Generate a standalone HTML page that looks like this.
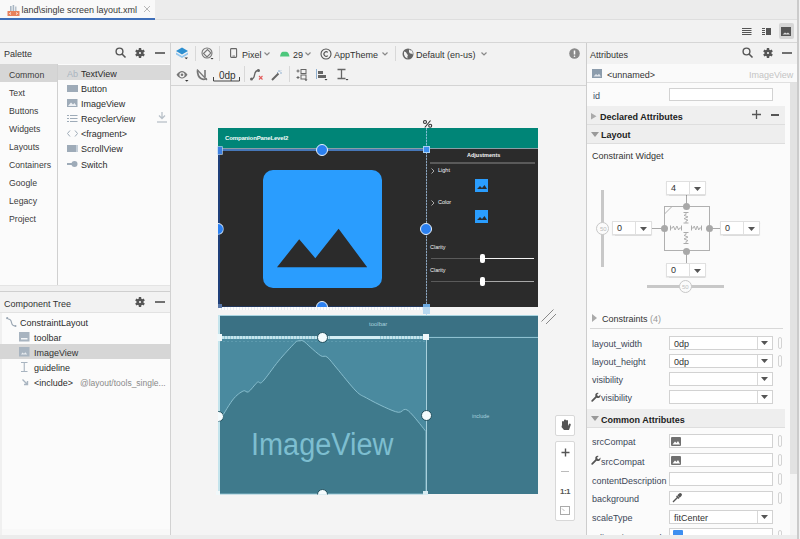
<!DOCTYPE html>
<html><head><meta charset="utf-8">
<style>
*{box-sizing:border-box;margin:0;padding:0}
html,body{width:800px;height:539px;overflow:hidden;background:#f2f2f2;font-family:"Liberation Sans",sans-serif;color:#2b2b2b;font-size:9px}
.a{position:absolute}
.t{position:absolute;white-space:nowrap;line-height:10px;height:10px}
svg{position:absolute;overflow:visible}
.ic{fill:#6e6e6e}
.bx{position:absolute;background:#fff;border:1px solid #d2d2d2}
</style></head><body>
<!-- top tab bar -->
<div class="a" style="left:0;top:0;width:800px;height:20px;background:#ececec;border-bottom:1px solid #dedede"></div>
<div class="a" style="left:0;top:0;width:155px;height:20px;background:#f9f9f9"></div>
<div class="a" style="left:0;top:17.5px;width:155px;height:3px;background:#3f6fb9"></div>
<svg style="left:7px;top:4px" width="13" height="12"><rect x="0.5" y="7" width="12" height="5" fill="#e9825c"/><rect x="3" y="2" width="1.6" height="5" fill="#a8b6c4"/><rect x="5.6" y="1" width="1.6" height="6" fill="#a8b6c4"/><rect x="8.2" y="2.5" width="1.2" height="4.5" fill="#a8b6c4"/><path d="M4 8.5l-1.5 1 1.5 1M9 8.5l1.5 1-1.5 1" stroke="#fff" stroke-width="0.8" fill="none"/></svg>
<div class="t" style="left:21.5px;top:5px;font-size:9px;color:#3a3a3a">land\single screen layout.xml</div>
<svg style="left:143px;top:5px" width="8" height="8"><path d="M1 1l6 6M7 1l-6 6" stroke="#b8b8b8" stroke-width="1"/></svg>
<!-- toolbar row -->
<div class="a" style="left:0;top:20px;width:800px;height:23px;background:#f2f2f2;border-bottom:1px solid #d6d6d6"></div>
<svg style="left:742px;top:27px" width="10" height="9"><path d="M0 1.5h9.5M0 3.5h9.5M0 5.5h9.5M0 7.5h9.5" stroke="#555" stroke-width="1"/></svg>
<svg style="left:762px;top:27px" width="10" height="9"><path d="M0 1.5h3M0 3.5h3M0 5.5h3M0 7.5h3" stroke="#555" stroke-width="1"/><rect x="4" y="1" width="5" height="7" fill="#555"/></svg>
<div class="a" style="left:779px;top:23px;width:15px;height:16px;background:#d6d6d6;border-radius:2px"></div>
<svg style="left:781px;top:27px" width="10" height="9"><rect x="0" y="0" width="10" height="9" fill="#555"/><path d="M1.5 7.5l2.5-2 1.5 1 1.5-1 2 2z" fill="#ddd"/></svg>

<!-- LEFT PANEL -->
<div class="a" style="left:0;top:43px;width:170px;height:21px;background:#f2f2f2"></div>
<div class="t" style="left:4px;top:49px;color:#333">Palette</div>
<svg style="left:115px;top:47px" width="12" height="12"><circle cx="4.5" cy="4.5" r="3.4" stroke="#555" stroke-width="1.4" fill="none"/><path d="M7 7l3.5 3.5" stroke="#555" stroke-width="1.6"/></svg>
<svg style="left:135px;top:48px" width="10" height="10"><circle cx="5" cy="5" r="3.5" fill="#555"/><path d="M6.13 7.04L8.64 8.49L9.84 6.41L7.33 4.96zM3.80 7.00L3.80 9.90L6.20 9.90L6.20 7.00zM2.67 4.96L0.16 6.41L1.36 8.49L3.87 7.04zM3.87 2.96L1.36 1.51L0.16 3.59L2.67 5.04zM6.20 3.00L6.20 0.10L3.80 0.10L3.80 3.00zM7.33 5.04L9.84 3.59L8.64 1.51L6.13 2.96z" fill="#555"/><circle cx="5" cy="5" r="1.1" fill="#f2f2f2"/></svg>
<div class="a" style="left:155px;top:52px;width:9.5px;height:2px;background:#707070"></div>

<div class="a" style="left:0;top:64px;width:170px;height:221px;background:#fbfbfb"></div>

<div class="a" style="left:0;top:64px;width:57px;height:18px;background:#d6d6d6"></div>
<div class="a" style="left:58px;top:65px;width:112px;height:15px;background:#d9d9d9"></div>
<div class="a" style="left:57px;top:64px;width:1px;height:221px;background:#d0d0d0"></div>
<div class="t" style="left:9px;top:70px;font-size:8.7px;color:#3c3c3c">Common</div>
<div class="t" style="left:9px;top:88px;font-size:8.7px;color:#3c3c3c">Text</div>
<div class="t" style="left:9px;top:106px;font-size:8.7px;color:#3c3c3c">Buttons</div>
<div class="t" style="left:9px;top:124px;font-size:8.7px;color:#3c3c3c">Widgets</div>
<div class="t" style="left:9px;top:142px;font-size:8.7px;color:#3c3c3c">Layouts</div>
<div class="t" style="left:9px;top:160px;font-size:8.7px;color:#3c3c3c">Containers</div>
<div class="t" style="left:9px;top:178px;font-size:8.7px;color:#3c3c3c">Google</div>
<div class="t" style="left:9px;top:196px;font-size:8.7px;color:#3c3c3c">Legacy</div>
<div class="t" style="left:9px;top:214px;font-size:8.7px;color:#3c3c3c">Project</div>

<div class="t" style="left:67px;top:69px;color:#aab4c0;font-size:9px">Ab</div>
<div class="t" style="left:81px;top:69px">TextView</div>
<div class="a" style="left:67px;top:85px;width:10.5px;height:7px;background:#9eabb8"></div>
<div class="t" style="left:81px;top:84px">Button</div>
<svg style="left:67px;top:99px" width="11" height="9"><rect x="0" y="0" width="10.5" height="8" fill="#9eabb8"/><path d="M1 7l3-3.5 2 2 1.5-1.5 2 3z" fill="#eef1f4"/></svg>
<div class="t" style="left:81px;top:99px">ImageView</div>
<svg style="left:67px;top:114px" width="11" height="9"><path d="M0 1.5h2M3 1.5h7.5M0 4.5h2M3 4.5h7.5M0 7.5h2M3 7.5h7.5" stroke="#9eabb8" stroke-width="1.2"/></svg>
<div class="t" style="left:81px;top:114px">RecyclerView</div>
<svg style="left:157px;top:112px" width="10" height="11"><path d="M5 0v6M2 3.5l3 3 3-3" stroke="#b8c0c8" stroke-width="1.3" fill="none"/><path d="M0 10h10" stroke="#b8c0c8" stroke-width="1.3"/></svg>
<svg style="left:67px;top:130px" width="11" height="8"><path d="M3 0.5l-2.5 3 2.5 3M8 0.5l2.5 3-2.5 3" stroke="#9eabb8" stroke-width="1" fill="none"/></svg>
<div class="t" style="left:81px;top:129px">&lt;fragment&gt;</div>
<div class="a" style="left:67px;top:145px;width:10.5px;height:7px;background:#9eabb8;border-right:2px solid #c4ced8"></div>
<div class="t" style="left:81px;top:144px">ScrollView</div>
<svg style="left:67px;top:160px" width="11" height="8"><path d="M0 4h5" stroke="#9eabb8" stroke-width="2"/><circle cx="7.5" cy="4" r="3" fill="#9eabb8"/></svg>
<div class="t" style="left:81px;top:160px">Switch</div>

<div class="a" style="left:0;top:285px;width:170px;height:7px;background:#f0f0f0;border-top:1px solid #e4e4e4;border-bottom:1px solid #cfcfcf"></div>
<div class="a" style="left:0;top:292px;width:170px;height:21px;background:#f2f2f2;border-bottom:1px solid #e2e2e2"></div>
<div class="t" style="left:4px;top:299px;color:#333">Component Tree</div>
<svg style="left:135px;top:297px" width="10" height="10"><circle cx="5" cy="5" r="3.5" fill="#555"/><path d="M6.13 7.04L8.64 8.49L9.84 6.41L7.33 4.96zM3.80 7.00L3.80 9.90L6.20 9.90L6.20 7.00zM2.67 4.96L0.16 6.41L1.36 8.49L3.87 7.04zM3.87 2.96L1.36 1.51L0.16 3.59L2.67 5.04zM6.20 3.00L6.20 0.10L3.80 0.10L3.80 3.00zM7.33 5.04L9.84 3.59L8.64 1.51L6.13 2.96z" fill="#555"/><circle cx="5" cy="5" r="1.1" fill="#f2f2f2"/></svg>
<div class="a" style="left:155px;top:301px;width:9.5px;height:2px;background:#707070"></div>
<div class="a" style="left:0;top:313px;width:170px;height:216px;background:#fbfbfb"></div>
<div class="a" style="left:0;top:529px;width:170px;height:6px;background:#f8f8f8"></div><div class="a" style="left:0;top:313px;width:2px;height:222px;background:#f0f0f0"></div>
<div class="a" style="left:0;top:344px;width:170px;height:15px;background:#d6d6d6"></div>
<svg style="left:6px;top:317px" width="11" height="11"><circle cx="1.2" cy="1.2" r="1.1" fill="#9aa6b2"/><path d="M2 2q3 0 3.5 3.5t4 3.5" stroke="#9aa6b2" stroke-width="1.2" fill="none"/><circle cx="9.5" cy="9" r="1" fill="#9aa6b2"/></svg>
<div class="t" style="left:20px;top:318px">ConstraintLayout</div>
<svg style="left:19px;top:332px" width="11" height="10"><rect x="0" y="0" width="10.5" height="9.5" fill="#a8b4c0"/><rect x="2" y="6" width="6.5" height="1.5" fill="#f4f6f8"/></svg>
<div class="t" style="left:34px;top:333px">toolbar</div>
<svg style="left:19px;top:347px" width="11" height="10"><rect x="0" y="0" width="10.5" height="9.5" fill="#a8b4c0"/><path d="M2 7.5l1.5-2 1.5 1.2 1.3-1.5 2 2.3z" fill="#e8ecf0"/></svg>
<div class="t" style="left:34px;top:348px;color:#333">ImageView</div>
<svg style="left:21px;top:362px" width="7" height="10"><path d="M0 0.5h6.5M3.25 0.5v9M0 9.5h6.5" stroke="#a8b4c0" stroke-width="1.1"/></svg>
<div class="t" style="left:34px;top:363px">guideline</div>
<svg style="left:22px;top:379px" width="7" height="7"><path d="M0.5 0.5l5 5M5.5 2v3.5h-3.5" stroke="#a8b4c0" stroke-width="1.4" fill="none"/></svg>
<div class="t" style="left:34px;top:378px">&lt;include&gt;</div>
<div class="t" style="left:80px;top:378px;color:#8a8a8a;font-size:8.5px">@layout/tools_single...</div>
<div class="a" style="left:170px;top:43px;width:1px;height:496px;background:#d2d2d2"></div>

<!-- CENTER -->
<div class="a" style="left:171px;top:43px;width:415px;height:43px;background:#f2f2f2;border-bottom:1px solid #d4d4d4"></div>
<div class="a" style="left:171px;top:86px;width:415px;height:453px;background:#f4f4f4"></div>
<!-- toolbar row1 -->
<svg style="left:175px;top:46px" width="14" height="14"><path d="M1 5l6-3.5 6 3.5-6 3.5z" fill="#2d8fd0"/><path d="M1 6.5l6 3.5 6-3.5v2l-6 3.5-6-3.5z" fill="#92c6ee"/><path d="M9.5 11.5h3.5l-1.75 1.8z" fill="#333"/></svg>
<div class="a" style="left:195px;top:46px;width:1px;height:15px;background:#d8d8d8"></div>
<svg style="left:201px;top:47px" width="13" height="13"><circle cx="6" cy="6" r="5" stroke="#777" stroke-width="1.1" fill="none"/><path d="M2.5 6.5l4-4 3.5 3.5-4 4z" stroke="#777" stroke-width="1.1" fill="#f2f2f2"/><path d="M9.5 11h3l-1.5 1.6z" fill="#333"/></svg>
<div class="a" style="left:219px;top:46px;width:1px;height:15px;background:#d8d8d8"></div>
<svg style="left:230px;top:48px" width="8" height="10"><rect x="0.6" y="0.6" width="6" height="8.8" rx="0.8" stroke="#666" stroke-width="1.1" fill="none"/><path d="M2.5 8h2.5" stroke="#666" stroke-width="0.8"/></svg>
<div class="t" style="left:242px;top:50px;color:#333">Pixel</div>
<svg style="left:264px;top:52px" width="6" height="4"><path d="M0.5 0.5l2.5 2.5 2.5-2.5" stroke="#888" stroke-width="1.2" fill="none"/></svg>
<svg style="left:280px;top:51px" width="10" height="6"><path d="M0 5.5Q0.8 1 3 0.8H6Q8.7 1 9.5 5.5z" fill="#4dc77c"/></svg>
<div class="t" style="left:293px;top:50px;color:#333">29</div>
<svg style="left:305px;top:52px" width="6" height="4"><path d="M0.5 0.5l2.5 2.5 2.5-2.5" stroke="#888" stroke-width="1.2" fill="none"/></svg>
<svg style="left:320px;top:48px" width="12" height="12"><circle cx="6" cy="6" r="5" stroke="#555" stroke-width="1.1" fill="none"/><path d="M7.8 4.3a2.3 2.3 0 1 0 0 3.4" stroke="#555" stroke-width="1.1" fill="none"/></svg>
<div class="t" style="left:334px;top:50px;color:#333">AppTheme</div>
<svg style="left:382px;top:52px" width="6" height="4"><path d="M0.5 0.5l2.5 2.5 2.5-2.5" stroke="#888" stroke-width="1.2" fill="none"/></svg>
<div class="a" style="left:395px;top:46px;width:1px;height:15px;background:#d8d8d8"></div>
<svg style="left:402px;top:48px" width="12" height="12"><circle cx="6" cy="6" r="5.5" fill="#666"/><path d="M2 3.5q2 0 2.5 1.5t1.5 2q-1 1-.5 3.5q-3-1-3.5-4zM7 1.2q1 1.5 3 1.3q1 2 .5 4q-1-1.5-2.5-1q-1.5-1-1-4.3z" fill="#f2f2f2"/></svg>
<div class="t" style="left:416px;top:50px;color:#333">Default (en-us)</div>
<svg style="left:481px;top:52px" width="6" height="4"><path d="M0.5 0.5l2.5 2.5 2.5-2.5" stroke="#888" stroke-width="1.2" fill="none"/></svg>
<svg style="left:569px;top:48px" width="11" height="11"><circle cx="5.5" cy="5.5" r="5.3" fill="#8a8a8a"/><path d="M5.5 2.5v4" stroke="#fff" stroke-width="1.5"/><circle cx="5.5" cy="8.3" r="0.8" fill="#fff"/></svg>
<!-- toolbar row2 -->
<svg style="left:176px;top:70px" width="13" height="12"><path d="M0.5 4.8q5.5-7.5 11 0q-5.5 7.5-11 0z" fill="#777"/><circle cx="6" cy="4.8" r="2.6" fill="#f2f2f2"/><circle cx="6" cy="4.8" r="1.3" fill="#777"/><path d="M9 10h3.5l-1.75 1.8z" fill="#333"/></svg>
<svg style="left:196px;top:69px" width="12" height="12"><path d="M1.5 1.5q0 6 3.5 8t5.5-.5" stroke="#777" stroke-width="1.8" fill="none"/><path d="M9 1v7" stroke="#777" stroke-width="1.6"/><path d="M1 0.5l10 10.5" stroke="#777" stroke-width="1.2"/></svg>
<div class="t" style="left:219px;top:71px;font-size:10px;color:#333">0dp</div>
<svg style="left:213px;top:76px" width="28" height="6"><path d="M0.5 1v4h26v-4" stroke="#444" stroke-width="1" fill="none"/></svg>
<div class="a" style="left:244px;top:66px;width:1px;height:16px;background:#d8d8d8"></div>
<svg style="left:250px;top:69px" width="14" height="12"><path d="M1 10q3 0 3.5-4t4-5" stroke="#666" stroke-width="1.4" fill="none"/><circle cx="1.5" cy="10" r="1.5" fill="#666"/><circle cx="8.5" cy="1.5" r="1.5" fill="#666"/><path d="M9 7l3.5 3.5M12.5 7l-3.5 3.5" stroke="#e25b5b" stroke-width="1.1"/></svg>
<svg style="left:271px;top:69px" width="12" height="12"><path d="M1 11l6.5-6.5" stroke="#666" stroke-width="2"/><path d="M8 1v2M11 4h-2M10 1.5l-1 1M6 3l1 1" stroke="#8fb0d0" stroke-width="1"/></svg>
<div class="a" style="left:289px;top:66px;width:1px;height:16px;background:#d8d8d8"></div>
<svg style="left:296px;top:69px" width="12" height="12"><path d="M2 0.5v3M0.5 2h3M2 7v3M0.5 8.5h3" stroke="#666" stroke-width="1"/><rect x="5" y="0.5" width="5" height="4" stroke="#666" fill="none"/><rect x="5" y="6" width="5" height="4" stroke="#666" fill="none"/><path d="M8.5 10.5h3l-1.5 1.5z" fill="#333"/></svg>
<svg style="left:316px;top:69px" width="12" height="12"><path d="M0.5 0v10" stroke="#8fb0d0" stroke-width="1"/><rect x="2" y="2" width="5" height="3" fill="#666"/><rect x="2" y="6" width="8" height="3" fill="#666"/><path d="M8.5 10h3l-1.5 1.5z" fill="#333"/></svg>
<svg style="left:337px;top:69px" width="12" height="12"><path d="M0.5 0.5h8M4.5 0.5v9M0.5 9.5h8" stroke="#666" stroke-width="1.3"/><path d="M8.5 10h3l-1.5 1.5z" fill="#333"/></svg>

<!-- top device -->
<div class="a" style="left:218px;top:128px;width:320px;height:21px;background:#008577"></div>
<div class="t" style="left:225px;top:135px;font-size:6px;line-height:7px;color:#f4fbfa;font-weight:bold;letter-spacing:-0.15px">CompanionPaneLevel2</div>
<div class="a" style="left:218px;top:149px;width:320px;height:158px;background:#2b2b2b"></div>
<div class="a" style="left:219px;top:148px;width:319px;height:1px;background:#8a9ea6"></div><div class="a" style="left:219px;top:149px;width:207px;height:2px;background:#4677b8"></div>
<div class="a" style="left:218px;top:150px;width:2px;height:157px;background:#1f3f78"></div>
<div class="a" style="left:219px;top:305.5px;width:207px;height:1.5px;background:#22365a"></div><div class="a" style="left:219px;top:307px;width:207px;height:3px;background:repeating-linear-gradient(90deg,#fdfdfd 0 2px,#e8eef4 2px 3px)"></div>
<!-- image icon -->
<svg style="left:263px;top:170px" width="119" height="118"><rect x="0" y="0" width="119" height="118" rx="10" fill="#2a9dfe"/><path d="M14 97.3L36.2 69.2 52.3 88.2 75.6 58.8 104.2 97.3z" fill="#2b2b2b"/></svg>
<!-- adjustments panel -->
<div class="t" style="left:467px;top:152px;font-size:5.5px;line-height:7px;color:#f4f4f4;font-weight:bold">Adjustments</div>
<div class="a" style="left:430px;top:162px;width:105px;height:1.5px;background:#5a5a5a"></div>
<svg style="left:431px;top:168px" width="4" height="6"><path d="M0.5 0.5l2.5 2.5-2.5 2.5" stroke="#ccc" stroke-width="0.8" fill="none"/></svg>
<div class="t" style="left:438px;top:167px;font-size:5.5px;line-height:7px;color:#f4f4f4">Light</div>
<svg style="left:475px;top:179px" width="13" height="13"><rect width="13" height="13" fill="#2a9dfe"/><path d="M2 10l3-3 2 2 2.5-3 2.5 4z" fill="#2b2b2b"/></svg>
<svg style="left:431px;top:200px" width="4" height="6"><path d="M0.5 0.5l2.5 2.5-2.5 2.5" stroke="#ccc" stroke-width="0.8" fill="none"/></svg>
<div class="t" style="left:438px;top:199px;font-size:5.5px;line-height:7px;color:#f4f4f4">Color</div>
<svg style="left:475px;top:210px" width="13" height="13"><rect width="13" height="13" fill="#2a9dfe"/><path d="M2 10l3-3 2 2 2.5-3 2.5 4z" fill="#2b2b2b"/></svg>
<div class="t" style="left:430px;top:244px;font-size:5.5px;line-height:7px;color:#f0f0f0">Clarity</div>
<div class="a" style="left:431px;top:258px;width:51px;height:1px;background:#5a5a5a"></div>
<div class="a" style="left:482px;top:257.5px;width:52px;height:1.5px;background:#f4f4f4"></div>
<div class="a" style="left:480px;top:254px;width:4.5px;height:9px;background:#fff;border-radius:2px"></div>
<div class="t" style="left:430px;top:267px;font-size:5.5px;line-height:7px;color:#f0f0f0">Clarity</div>
<div class="a" style="left:431px;top:281px;width:51px;height:1px;background:#5a5a5a"></div>
<div class="a" style="left:482px;top:280.5px;width:52px;height:1.5px;background:#a8a8a8"></div>
<div class="a" style="left:480px;top:277px;width:4.5px;height:9px;background:#fff;border-radius:2px"></div>
<!-- guideline -->
<svg style="left:423px;top:120px" width="10" height="8"><circle cx="2" cy="2" r="1.5" stroke="#333" stroke-width="1.1" fill="none"/><circle cx="7.2" cy="5.8" r="1.5" stroke="#333" stroke-width="1.1" fill="none"/><path d="M7.5 0.5L1.8 7.5" stroke="#333" stroke-width="1.1"/></svg>
<div class="a" style="left:426px;top:128px;width:1px;height:366px;background:repeating-linear-gradient(180deg,rgba(170,205,240,.75) 0 2px,rgba(170,205,240,.25) 2px 3px)"></div>
<div class="a" style="left:423px;top:146px;width:7px;height:7px;background:#3d8ff0;border:1px solid #a8d0f4"></div>
<div class="a" style="left:423px;top:304px;width:7px;height:10px;background:#b8d8f0;border-top:3px solid #6aa8e0"></div>
<!-- anchors top device -->
<div class="a" style="left:316px;top:143.8px;width:12px;height:12px;border-radius:50%;background:#2b80f0;border:1.7px solid #eaf3fc"></div>
<div class="a" style="left:211.5px;top:222.6px;width:12px;height:12px;border-radius:50%;background:#2b80f0;border:1.7px solid #eaf3fc;clip-path:inset(0 0 0 6.5px)"></div>
<div class="a" style="left:420.2px;top:222.9px;width:12px;height:12px;border-radius:50%;background:#2b80f0;border:1.7px solid #eaf3fc"></div>
<div class="a" style="left:316px;top:301px;width:12px;height:12px;border-radius:50%;background:#2b80f0;border:1.7px solid #eaf3fc;clip-path:inset(0 0 6px 0)"></div>
<div class="a" style="left:218px;top:146.5px;width:4px;height:7px;background:#3d7fe0;box-shadow:0 0 0 0.7px #b8d8f8"></div>
<div class="a" style="left:218px;top:304px;width:4px;height:4px;background:#5a78a8"></div>

<!-- bottom blueprint -->
<div class="a" style="left:218px;top:315px;width:320px;height:179px;background:#3e788b"></div>
<div class="a" style="left:218px;top:315px;width:320px;height:21px;background:#3a7184"></div>
<svg style="left:218px;top:336px" width="208" height="158"><path d="M0 0H208V158H0z" fill="#4a8a9f"/><path d="M0.5 86.8C2.8 83.0 10.5 69.3 14.6 64.0C18.7 58.7 22.5 56.4 25.2 55.0C27.8 53.6 28.1 57.3 30.5 55.8C32.9 54.4 37.0 48.0 39.3 46.3C41.7 44.6 41.1 49.2 44.6 45.6C48.1 42.1 55.2 31.4 60.5 25.0C65.8 18.6 73.1 10.8 76.3 7.5C79.6 4.2 78.5 5.4 80.0 5.0C81.5 4.6 83.2 4.0 85.2 5.0C87.2 6.0 89.3 8.5 92.2 11.0C95.1 13.5 100.0 18.1 102.8 19.8C105.6 21.5 106.4 19.0 109.0 21.0C111.6 23.0 113.8 26.3 118.6 32.0C123.4 37.7 133.0 50.0 138.0 55.0C143.0 60.0 143.9 59.3 148.6 62.0C153.3 64.7 161.0 68.6 166.3 71.0C171.6 73.4 176.9 75.9 180.4 76.3C183.9 76.7 185.0 72.9 187.4 73.4C189.7 73.8 191.1 75.3 194.5 79.0C197.9 82.7 205.8 92.8 208.0 95.6V158H0.5z" fill="#3f7a8c" stroke="#8fc3d3" stroke-width="0.9"/></svg>
<div class="t" style="left:251px;top:428.5px;height:32px;line-height:32px;font-size:31px;color:#7dbed0;transform:scaleX(0.932);transform-origin:0 0">ImageView</div>
<div class="t" style="left:369px;top:321px;font-size:6px;line-height:7px;color:#a8d0dc">toolbar</div>
<div class="t" style="left:472px;top:413px;font-size:5.5px;line-height:7px;color:#a8d0dc">include</div>
<div class="a" style="left:219px;top:336px;width:207px;height:2.5px;background:repeating-linear-gradient(90deg,#c4e4ec 0 2px,#94c8d6 2px 3px)"></div><div class="a" style="left:330px;top:336px;width:50px;height:2.5px;background:#d4eef4"></div><div class="a" style="left:219px;top:340.5px;width:207px;height:1px;background:repeating-linear-gradient(90deg,rgba(160,210,225,.22) 0 2px,transparent 2px 4px)"></div><div class="a" style="left:426px;top:336.5px;width:112px;height:1.2px;background:#8ec0d0"></div><div class="a" style="left:218px;top:314.5px;width:320px;height:1px;background:#a8d4e0"></div>
<div class="a" style="left:426px;top:337px;width:1px;height:157px;background:#a8d0dc"></div>
<div class="a" style="left:218px;top:315px;width:1.5px;height:179px;background:#c4e4ec"></div>
<div class="a" style="left:316.5px;top:331.5px;width:11.5px;height:11.5px;border-radius:50%;background:#f4fbfd;border:1.5px solid #22505e"></div>
<div class="a" style="left:212.5px;top:410.5px;width:11px;height:11px;border-radius:50%;background:#f4fbfd;border:1.3px solid #22505e;clip-path:inset(0 0 0 5.5px)"></div>
<div class="a" style="left:420.5px;top:410.3px;width:11px;height:11px;border-radius:50%;background:#f4fbfd;border:1.3px solid #22505e"></div>
<div class="a" style="left:317px;top:489px;width:11px;height:11px;border-radius:50%;background:#f4fbfd;border:1.3px solid #22505e;clip-path:inset(0 0 5.5px 0)"></div>
<div class="a" style="left:217px;top:334px;width:5px;height:7px;background:#f0f8fa"></div>
<div class="a" style="left:423px;top:334px;width:6px;height:6px;background:#f0f8fa"></div>
<div class="a" style="left:216px;top:491px;width:4px;height:4px;background:#f0f8fa"></div>
<div class="a" style="left:423px;top:491px;width:5px;height:4px;background:#d8ecf2"></div>
<svg style="left:540px;top:308px" width="18" height="18"><path d="M1.5 13.5l12-12M6 16l10-10" stroke="#888" stroke-width="1"/></svg>
<!-- zoom controls -->
<div class="a" style="left:555px;top:415px;width:20px;height:21px;background:#fff;border:1px solid #d8d8d8;border-radius:2px"></div>
<svg style="left:560px;top:419px" width="11" height="13"><path d="M2 6V3a1 1 0 0 1 2 0V6V1.5a1 1 0 0 1 2 0V6V2a1 1 0 0 1 2 0V7l1-2a1 1 0 0 1 1.7 1L9 11H4L1.5 8z" fill="#555"/></svg>
<div class="a" style="left:555px;top:441px;width:20px;height:80px;background:#fff;border:1px solid #d8d8d8;border-radius:2px"></div>
<svg style="left:561px;top:448px" width="9" height="9"><path d="M4.5 0.5v8M0.5 4.5h8" stroke="#555" stroke-width="1.4"/></svg>
<div class="a" style="left:561px;top:470.5px;width:8px;height:1.2px;background:#bbb"></div>
<div class="t" style="left:560px;top:487px;font-size:8px;color:#555;letter-spacing:-0.5px;font-weight:bold">1:1</div>
<svg style="left:560px;top:506px" width="10" height="9"><rect x="0.5" y="0.5" width="9" height="8" stroke="#aaa" fill="none"/><path d="M2 2.5l2.5 2.5" stroke="#bbb"/></svg>
<!-- RIGHT PANEL -->
<div class="a" style="left:586px;top:43px;width:1px;height:496px;background:#cdcdcd"></div>
<div class="a" style="left:587px;top:43px;width:213px;height:21px;background:#f2f2f2"></div>
<div class="t" style="left:590px;top:50px;color:#333">Attributes</div>
<svg style="left:742px;top:47px" width="12" height="12"><circle cx="4.5" cy="4.5" r="3.4" stroke="#555" stroke-width="1.4" fill="none"/><path d="M7 7l3.5 3.5" stroke="#555" stroke-width="1.6"/></svg>
<svg style="left:763px;top:48px" width="10" height="10"><circle cx="5" cy="5" r="3.5" fill="#555"/><path d="M6.13 7.04L8.64 8.49L9.84 6.41L7.33 4.96zM3.80 7.00L3.80 9.90L6.20 9.90L6.20 7.00zM2.67 4.96L0.16 6.41L1.36 8.49L3.87 7.04zM3.87 2.96L1.36 1.51L0.16 3.59L2.67 5.04zM6.20 3.00L6.20 0.10L3.80 0.10L3.80 3.00zM7.33 5.04L9.84 3.59L8.64 1.51L6.13 2.96z" fill="#555"/><circle cx="5" cy="5" r="1.1" fill="#f2f2f2"/></svg>
<div class="a" style="left:782px;top:52px;width:9.5px;height:2px;background:#707070"></div>
<div class="a" style="left:587px;top:64px;width:213px;height:19px;background:#fafafa;border-bottom:1px solid #e0e0e0"></div>
<svg style="left:592px;top:69px" width="10" height="9"><rect width="10" height="9" fill="#8c9cac"/><path d="M1.5 7.5l2.5-2.5 1.5 1.2 1.5-1.5 2 2.8z" fill="#dfe4ea"/></svg>
<div class="t" style="left:607px;top:70px;color:#333">&lt;unnamed&gt;</div>
<div class="t" style="left:749px;top:70px;color:#c4c4c4">ImageView</div>
<div class="a" style="left:587px;top:83px;width:203px;height:456px;background:#fbfbfb"></div>
<div class="a" style="left:790px;top:83px;width:7px;height:391px;background:#e2e2e2"></div>
<div class="a" style="left:790px;top:474px;width:7px;height:65px;background:#f4f4f4"></div>

<div class="t" style="left:593px;top:91px;color:#3e4f66">id</div>
<div class="bx" style="left:669px;top:88px;width:104px;height:13px"></div>
<div class="a" style="left:587px;top:106px;width:198px;height:19px;background:#efefef;border-bottom:1px solid #dedede"></div>
<svg style="left:591px;top:113px" width="6" height="7"><path d="M0 0l5.5 3.2-5.5 3.2z" fill="#aaa"/></svg>
<div class="t" style="left:600px;top:112px;font-weight:bold;color:#222">Declared Attributes</div>
<svg style="left:752px;top:110px" width="9" height="9"><path d="M4.5 0v9M0 4.5h9" stroke="#555" stroke-width="1.3"/></svg>
<div class="a" style="left:771px;top:114px;width:8px;height:1.5px;background:#555"></div>
<div class="a" style="left:587px;top:125px;width:198px;height:19px;background:#eeeeee;border-bottom:1px solid #dedede"></div>
<svg style="left:591px;top:132px" width="8" height="6"><path d="M0 0h8l-4 5z" fill="#999"/></svg>
<div class="t" style="left:601px;top:130px;font-weight:bold;color:#222">Layout</div>
<div class="t" style="left:592px;top:151px;color:#333">Constraint Widget</div>
<!-- constraint widget -->
<div class="a" style="left:601px;top:190px;width:3px;height:77px;background:#c8c8c8"></div>
<div class="a" style="left:596px;top:222px;width:13px;height:13px;border-radius:50%;background:#fbfbfb;border:1px solid #c8c8c8"></div>
<div class="a" style="left:647px;top:285px;width:77px;height:3px;background:#c8c8c8"></div>
<div class="a" style="left:679px;top:280px;width:13px;height:13px;border-radius:50%;background:#fbfbfb;border:1px solid #c8c8c8"></div><svg style="left:682px;top:283px" width="7" height="7"><text x="0" y="6" font-size="6" fill="#c0c0c0" font-family="Liberation Sans">50</text></svg>
<svg style="left:600px;top:224px" width="6" height="8"><text x="0" y="6.5" font-size="6" fill="#bbb" font-family="Liberation Sans">50</text></svg>
<div class="a" style="left:663.5px;top:205.5px;width:46.5px;height:45.5px;border:1.3px solid #b0b0b0"></div>
<svg style="left:664px;top:206px" width="46" height="45"><path d="M0.5 8l7.5-7.5" stroke="#b0b0b0" stroke-width="1"/><path d="M6.5 22H8.5L9.4 20L11.1 24L12.9 20L14.6 24L15.5 22H17.5" stroke="#aaa" stroke-width="0.9" fill="none"/><path d="M6.5 19.5v5M17.5 19.5v5" stroke="#aaa" stroke-width="1"/><path d="M27.5 22H29.5L30.2 20L31.8 24L33.2 20L34.8 24L35.5 22H37.5" stroke="#aaa" stroke-width="0.9" fill="none"/><path d="M27.5 19.5v5M37.5 19.5v5" stroke="#aaa" stroke-width="1"/><path d="M22 6.5V8.5L20 9.3L24 10.9L20 12.6L24 14.2L22 15V17" stroke="#aaa" stroke-width="0.9" fill="none"/><path d="M19.5 6.5h5M19.5 17h5" stroke="#aaa" stroke-width="1"/><path d="M22 26.5V28.5L20 29.4L24 31.1L20 32.9L24 34.6L22 35.5V37.5" stroke="#aaa" stroke-width="0.9" fill="none"/><path d="M19.5 26.5h5M19.5 37.5h5" stroke="#aaa" stroke-width="1"/></svg>
<div class="a" style="left:686px;top:194px;width:1px;height:12px;background:#a8a8a8"></div>
<div class="a" style="left:686px;top:251px;width:1px;height:12px;background:#a8a8a8"></div>
<div class="a" style="left:652px;top:228px;width:12px;height:1px;background:#a8a8a8"></div>
<div class="a" style="left:710px;top:228px;width:10px;height:1px;background:#a8a8a8"></div>
<div class="a" style="left:682.5px;top:202.5px;width:7px;height:7px;border-radius:50%;background:#a8a8a8"></div>
<div class="a" style="left:682.5px;top:247.5px;width:7px;height:7px;border-radius:50%;background:#a8a8a8"></div>
<div class="a" style="left:660.5px;top:224.5px;width:7px;height:7px;border-radius:50%;background:#a8a8a8"></div>
<div class="a" style="left:706px;top:224.5px;width:7px;height:7px;border-radius:50%;background:#a8a8a8"></div>
<div class="bx" style="left:666px;top:181px;width:40px;height:14px;border-color:#e0e0e0;box-shadow:0 0.5px 1px rgba(0,0,0,.12)"></div><div class="a" style="left:689px;top:182px;width:1px;height:12px;background:#e0e0e0"></div><div class="t" style="left:671px;top:183px;color:#333">4</div><svg style="left:694px;top:187px" width="8" height="4"><path d="M0 0h7l-3.5 4z" fill="#555"/></svg><div class="bx" style="left:612px;top:221px;width:40px;height:14px;border-color:#e0e0e0;box-shadow:0 0.5px 1px rgba(0,0,0,.12)"></div><div class="a" style="left:635px;top:222px;width:1px;height:12px;background:#e0e0e0"></div><div class="t" style="left:617px;top:223px;color:#333">0</div><svg style="left:640px;top:227px" width="8" height="4"><path d="M0 0h7l-3.5 4z" fill="#555"/></svg><div class="bx" style="left:720px;top:221px;width:40px;height:14px;border-color:#e0e0e0;box-shadow:0 0.5px 1px rgba(0,0,0,.12)"></div><div class="a" style="left:743px;top:222px;width:1px;height:12px;background:#e0e0e0"></div><div class="t" style="left:725px;top:223px;color:#333">0</div><svg style="left:748px;top:227px" width="8" height="4"><path d="M0 0h7l-3.5 4z" fill="#555"/></svg><div class="bx" style="left:666px;top:263px;width:40px;height:14px;border-color:#e0e0e0;box-shadow:0 0.5px 1px rgba(0,0,0,.12)"></div><div class="a" style="left:689px;top:264px;width:1px;height:12px;background:#e0e0e0"></div><div class="t" style="left:671px;top:265px;color:#333">0</div><svg style="left:694px;top:269px" width="8" height="4"><path d="M0 0h7l-3.5 4z" fill="#555"/></svg>
<svg style="left:592px;top:314px" width="6" height="8"><path d="M0 0l5 4-5 4z" fill="#aaa"/></svg>
<div class="t" style="left:602px;top:314px;color:#333">Constraints <span style="color:#999">(4)</span></div>
<div class="a" style="left:590px;top:328px;width:193px;height:1px;background:#d8d8d8"></div>
<div class="t" style="left:592px;top:339px;color:#3b4758">layout_width</div><div class="bx" style="left:669px;top:336px;width:104px;height:14px"></div><div class="a" style="left:757px;top:337px;width:1px;height:12px;background:#d8d8d8"></div><svg style="left:761px;top:341px" width="8" height="4"><path d="M0 0h7l-3.5 4z" fill="#555"/></svg><div class="t" style="left:674px;top:339px;color:#333">0dp</div><div class="a" style="left:778px;top:337px;width:4px;height:12px;border:1px solid #d4d4d4;border-radius:2px"></div><div class="t" style="left:592px;top:357px;color:#3b4758">layout_height</div><div class="bx" style="left:669px;top:354px;width:104px;height:14px"></div><div class="a" style="left:757px;top:355px;width:1px;height:12px;background:#d8d8d8"></div><svg style="left:761px;top:359px" width="8" height="4"><path d="M0 0h7l-3.5 4z" fill="#555"/></svg><div class="t" style="left:674px;top:357px;color:#333">0dp</div><div class="a" style="left:778px;top:355px;width:4px;height:12px;border:1px solid #d4d4d4;border-radius:2px"></div><div class="t" style="left:592px;top:375px;color:#3b4758">visibility</div><div class="bx" style="left:669px;top:372px;width:104px;height:14px"></div><div class="a" style="left:757px;top:373px;width:1px;height:12px;background:#d8d8d8"></div><svg style="left:761px;top:377px" width="8" height="4"><path d="M0 0h7l-3.5 4z" fill="#555"/></svg><svg style="left:591px;top:392px" width="10" height="10"><path d="M1.2 8.8l4.2-4.2" stroke="#555" stroke-width="1.8" stroke-linecap="round"/><path d="M4.5 4.5a2.6 2.6 0 0 1 3.2-3.6l-1.6 1.6.4 1.3 1.3.4 1.6-1.6a2.6 2.6 0 0 1-3.6 3.2z" fill="#555"/></svg><div class="t" style="left:601px;top:393px;color:#3b4758">visibility</div><div class="bx" style="left:669px;top:390px;width:104px;height:14px"></div><div class="a" style="left:757px;top:391px;width:1px;height:12px;background:#d8d8d8"></div><svg style="left:761px;top:395px" width="8" height="4"><path d="M0 0h7l-3.5 4z" fill="#555"/></svg><div class="a" style="left:587px;top:409px;width:198px;height:19px;background:#eeeeee;border-bottom:1px solid #dedede"></div>
<svg style="left:591px;top:416px" width="8" height="6"><path d="M0 0h8l-4 5z" fill="#999"/></svg>
<div class="t" style="left:601px;top:415px;font-weight:bold;color:#222">Common Attributes</div>
<div class="t" style="left:592px;top:437px;color:#3b4758">srcCompat</div><div class="bx" style="left:669px;top:434px;width:104px;height:14px"></div><svg style="left:671px;top:437px" width="10" height="9"><rect width="10" height="9" rx="1" fill="#707070"/><path d="M1.5 7.5l2.5-3 1.5 1.5 1.5-2 2 3.5z" fill="#fff"/></svg><div class="a" style="left:778px;top:435px;width:4px;height:12px;border:1px solid #d4d4d4;border-radius:2px"></div><svg style="left:591px;top:455px" width="10" height="10"><path d="M1.2 8.8l4.2-4.2" stroke="#555" stroke-width="1.8" stroke-linecap="round"/><path d="M4.5 4.5a2.6 2.6 0 0 1 3.2-3.6l-1.6 1.6.4 1.3 1.3.4 1.6-1.6a2.6 2.6 0 0 1-3.6 3.2z" fill="#555"/></svg><div class="t" style="left:601px;top:457px;color:#3b4758">srcCompat</div><div class="bx" style="left:669px;top:453px;width:104px;height:14px"></div><svg style="left:671px;top:456px" width="10" height="9"><rect width="10" height="9" rx="1" fill="#707070"/><path d="M1.5 7.5l2.5-3 1.5 1.5 1.5-2 2 3.5z" fill="#fff"/></svg><div class="a" style="left:778px;top:454px;width:4px;height:12px;border:1px solid #d4d4d4;border-radius:2px"></div><div class="t" style="left:592px;top:476px;color:#3b4758">contentDescription</div><div class="bx" style="left:669px;top:472px;width:104px;height:14px"></div><div class="a" style="left:778px;top:473px;width:4px;height:12px;border:1px solid #d4d4d4;border-radius:2px"></div><div class="t" style="left:592px;top:494px;color:#3b4758">background</div><div class="bx" style="left:669px;top:491px;width:104px;height:14px"></div><svg style="left:672px;top:493px" width="10" height="10"><path d="M1 9l5.2-5.2" stroke="#555" stroke-width="1.3"/><path d="M4.5 3l2.5 2.5M6.2 2.3l1.5 1.5 1.3-1.3a1 1 0 0 0-1.5-1.5z" stroke="#555" stroke-width="1.2" fill="#555"/></svg><div class="a" style="left:778px;top:492px;width:4px;height:12px;border:1px solid #d4d4d4;border-radius:2px"></div><div class="t" style="left:592px;top:513px;color:#3b4758">scaleType</div><div class="bx" style="left:669px;top:510px;width:104px;height:14px"></div><div class="a" style="left:757px;top:511px;width:1px;height:12px;background:#d8d8d8"></div><svg style="left:761px;top:515px" width="8" height="4"><path d="M0 0h7l-3.5 4z" fill="#555"/></svg><div class="t" style="left:674px;top:513px;color:#333">fitCenter</div><div class="bx" style="left:669px;top:528px;width:104px;height:14px"></div><div class="a" style="left:673px;top:530px;width:10px;height:9px;background:#3d8ff0;border-radius:1px"></div><div class="a" style="left:778px;top:530px;width:4px;height:12px;border:1px solid #d4d4d4;border-radius:2px"></div><div class="t" style="left:592px;top:533px;color:#3b4758">adjustViewBounds</div><div class="a" style="left:0;top:535px;width:800px;height:4px;background:#ececec"></div>
<div class="a" style="left:797px;top:0;width:1.5px;height:539px;background:#cbcbcb"></div><div class="a" style="left:798.5px;top:0;width:1.5px;height:539px;background:#f0f0f0"></div>
</body></html>
